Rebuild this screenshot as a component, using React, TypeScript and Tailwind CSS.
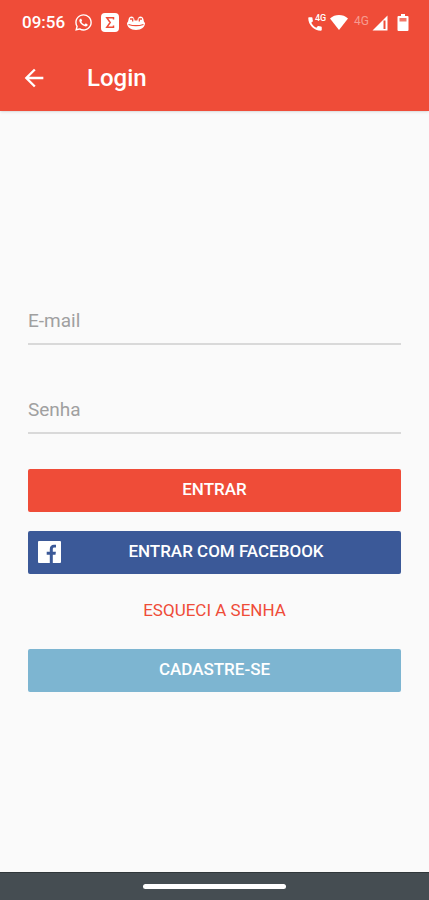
import { useState } from "react";
import { FaWhatsapp } from "react-icons/fa";
import { MdArrowBack, MdCall } from "react-icons/md";

interface FieldProps {
    id: string;
    label: string;
    type: string;
}

function Field({ id, label, type }: FieldProps) {
    const [value, setValue] = useState("");

    return (
        <div className="grid h-[55px] border-b-2 border-[#d9d9d9] focus-within:border-[#ef4c38]">
            {value === "" && (
                <label htmlFor={id} className="col-start-1 row-start-1 self-center pt-[11px] text-[19px] text-[#a0a0a0]">
                    {label}
                </label>
            )}
            <input
                id={id}
                type={type}
                value={value}
                onChange={(e) => setValue(e.target.value)}
                className="col-start-1 row-start-1 w-full bg-transparent pt-[11px] text-[19px] text-neutral-800 outline-none"
            />
        </div>
    );
}

function StatusBar() {
    return (
        <div className="flex h-[45px] items-center justify-between pl-[22px] pr-5 text-white">
            <div className="flex items-center gap-2">
                <span className="w-11 text-[17px] font-medium">09:56</span>
                <FaWhatsapp size={19} />

                <svg width="18" height="19" viewBox="0 0 18 19" aria-hidden="true">
                    <rect width="18" height="19" rx="4" fill="#fff" />
                    <path d="M12.500 6.500V4.800H5.800l3.400 4.700-3.400 4.700h6.700v-1.700" fill="none" stroke="#ef4c38" strokeWidth="1.500" />
                </svg>

                <svg width="18" height="14" viewBox="0 0 18 14" aria-hidden="true">
                    <path d="M0 7C1 6 1.300 5 1.500 3.500 1.800 1.500 3 .5 4.500 .5S7.400 1.800 7.600 4.500h2.800C10.600 1.800 12 .5 13.500 .5s2.700 1 3 3c.2 1.500.5 2.500 1.500 3.500 0 4-3.500 7-9 7S0 11 0 7z" fill="#fff" />
                    <path d="M3 3h2.700v2.500M15 3h-2.700v2.500M1.500 8.500c4 1.300 11 1.300 15 0" fill="none" stroke="#ef4c38" strokeWidth="1.300" />
                </svg>
            </div>

            <div className="flex items-center">
                <div className="relative mr-1 h-[18px] w-[18px]">
                    <MdCall size={18} className="absolute -left-[2px] top-[1px]" />
                    <span className="absolute left-[7px] top-0 text-[9px] font-medium leading-[9px]">4G</span>
                </div>

                <svg width="18" height="15" viewBox="0 0 18 15" fill="#fff" aria-hidden="true">
                    <path d="M0 3.500C5-1.100 13-1.100 18 3.500L9 15z" />
                </svg>

                <span className="ml-[6px] h-5 w-[18px] text-xs leading-4 text-white/45">4G</span>

                <svg width="16" height="16" viewBox="0 0 16 16" aria-hidden="true">
                    <path d="M15.500 .5v15H.5z" fill="#fff" />
                    <path d="M12.500 5.500v8.500" fill="none" stroke="#ef4c38" strokeWidth="2" />
                </svg>

                <svg className="ml-[9px]" width="12" height="17" viewBox="0 0 12 17" aria-hidden="true">
                    <path d="M4 0h4v2h2.500Q11.500 2 11.500 3v13q0 1-1 1h-9q-1 0-1-1V3q0-1 1-1H4z" fill="#fff" />
                    <path d="M2.500 4h7v3.500h-7z" fill="#ef4c38" fillOpacity=".75" />
                </svg>
            </div>
        </div>
    );
}

export default function App() {
    return (
        <div className="flex min-h-screen flex-col bg-[#fafafa] font-['Roboto',sans-serif]">
            <header className="bg-[#ef4c38] text-white shadow-sm">
                <StatusBar />
                <div className="flex h-[66px] items-center gap-[39px] px-5">
                    <button type="button" aria-label="Voltar">
                        <MdArrowBack size={28} />
                    </button>
                    <h1 className="text-2xl font-medium">Login</h1>
                </div>
            </header>

            <main className="flex flex-1 flex-col justify-center px-7 pb-[2px]">
                <form className="flex flex-col" onSubmit={(e) => e.preventDefault()}>
                    <div className="flex flex-col gap-[34px]">
                        <Field id="email" label="E-mail" type="email" />
                        <Field id="senha" label="Senha" type="password" />
                    </div>

                    <button type="submit" className="mt-[35px] h-[43px] rounded-xs bg-[#ef4c38] text-[17px] font-medium text-white">
                        ENTRAR
                    </button>

                    <button type="button" className="mt-[19px] flex h-[43px] items-center rounded-xs bg-[#3b5998] px-[10px] text-[17px] font-medium text-white">
                        <svg width="23" height="22" viewBox="0 0 23 22" aria-hidden="true">
                            <rect width="23" height="22" rx="1" fill="#fff" />
                            <path d="M11.800 22v-8.200H8.700v-3h3.100V8.200c0-3 1.500-4.500 4.200-4.500h2v2.700h-1.500c-1.300 0-1.700.7-1.700 1.700v2.700h3.100l-.4 3h-2.700V22z" fill="#3b5998" />
                        </svg>
                        <span className="flex-1 text-center">ENTRAR COM FACEBOOK</span>
                    </button>

                    <a href="#esqueci" className="flex h-[75px] items-center justify-center text-[17px] text-[#ef4c38]">
                        ESQUECI A SENHA
                    </a>

                    <button type="button" className="h-[43px] rounded-xs bg-[#7db5d1] text-[17px] font-medium text-white">
                        CADASTRE-SE
                    </button>
                </form>
            </main>

            <footer className="flex h-7 items-center justify-center border-t border-[#30373a] bg-[#454d52]">
                <div className="h-[5px] w-1/3 rounded-full bg-white" />
            </footer>
        </div>
    );
}
